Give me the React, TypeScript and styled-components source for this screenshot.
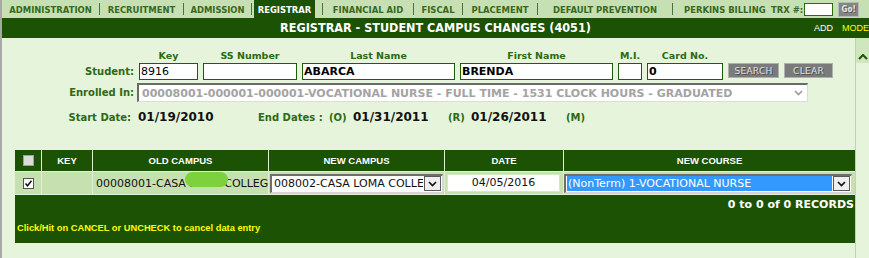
import React from "react";
import styled, { createGlobalStyle } from "styled-components";

const DARK = "#1b5204";
const BODY = "#e5f4db";
const LABEL = "#2d6a12";
const VERDANA = `"DejaVu Sans", Verdana, sans-serif`;
const TAHOMA = `"DejaVu Sans Condensed", "DejaVu Sans", Tahoma, sans-serif`;
const ARIAL = `"Liberation Sans", Arial, sans-serif`;

const GlobalStyle = createGlobalStyle`
  html, body { margin: 0; padding: 0; background: ${BODY}; }
  body { overflow: hidden; }
  * { box-sizing: border-box; }
`;

const Page = styled.div`
  width: 869px;
  height: 258px;
  border-left: 2px solid #a8a8a8;
  background: ${BODY};
  display: flex;
  flex-direction: column;
  overflow: hidden;
`;

/* ---------- top navigation ---------- */
const Nav = styled.nav`
  flex: none;
  height: 18px;
  display: flex;
  align-items: center;
  background: #c6e0b4;
  font: bold 9.4px ${TAHOMA};
  color: #36691c;
  white-space: nowrap;
`;

const NavCell = styled.div<{ $w: number; $pl?: number; $start?: boolean }>`
  flex: none;
  width: ${(p) => p.$w}px;
  height: 100%;
  display: flex;
  align-items: center;
  justify-content: ${(p) => (p.$start ? "flex-start" : "center")};
  padding-left: ${(p) => p.$pl ?? 0}px;
`;

const NavSep = styled.span`
  flex: none;
  width: 1px;
  height: 12px;
  background: #4a7040;
`;

const ActiveTab = styled.span`
  height: 100%;
  width: 61px;
  margin-left: 2px;
  background: ${DARK};
  color: #ffffff;
  display: flex;
  align-items: center;
  justify-content: center;
`;

const TrxLabel = styled.span`
  margin-right: 1px;
`;

const TrxInput = styled.input`
  width: 29px;
  height: 13px;
  margin: 0;
  padding: 0;
  border: 1px solid #2d6a12;
  background: #ffffff;
`;

const GoButton = styled.button`
  margin-left: 5px;
  width: 21px;
  height: 15px;
  padding: 0;
  background: #858585;
  border: 1px solid #b8b8b8;
  color: #e8e8e8;
  font: bold 8px ${TAHOMA};
  text-shadow: 1px 1px 0 #555555;
`;

/* ---------- title bar ---------- */
const TitleBar = styled.header`
  flex: none;
  height: 20px;
  background: ${DARK};
  display: grid;
  grid-template-columns: 1fr auto 1fr;
  align-items: center;
  overflow: hidden;
`;

const Title = styled.h1`
  grid-column: 2;
  margin: 0;
  padding-bottom: 2px;
  font: bold 12.5px ${TAHOMA};
  color: #ffffff;
  white-space: nowrap;
`;

const ModeTag = styled.div`
  grid-column: 3;
  justify-self: end;
  margin-right: 0;
  font: 9px ${ARIAL};
  color: #ffffff;
  white-space: nowrap;
`;

const ModeWord = styled.span`
  margin-left: 9px;
  color: #ffff00;
`;

/* ---------- body ---------- */
const Body = styled.div`
  flex: 1;
  display: flex;
  min-height: 0;
`;

const Main = styled.main`
  flex: 1;
  min-width: 0;
  padding-top: 12px;
`;

const ScrollCol = styled.div`
  flex: none;
  width: 14px;
  border-left: 1px solid #c0d2b6;
  display: flex;
  flex-direction: column;
`;

const ScrollUp = styled.div`
  height: 25px;
  background: #cfe6bf;
  display: flex;
  align-items: flex-end;
  justify-content: center;
  padding-bottom: 3px;
`;

/* ---------- student form ---------- */
const FormGrid = styled.div`
  display: grid;
  grid-template-columns: 132px 59px 94px 153px 153px 24px 76px 51px 49px;
  column-gap: 5px;
  row-gap: 1px;
  align-items: center;
`;

const ColHead = styled.div`
  text-align: center;
  font: bold 9.5px ${VERDANA};
  line-height: 12px;
  color: ${LABEL};
  white-space: nowrap;
`;

const RowLabel = styled.label`
  text-align: right;
  font: bold 10px ${VERDANA};
  color: ${LABEL};
  white-space: nowrap;
`;

const TextInput = styled.input<{ $bold?: boolean }>`
  width: 100%;
  height: 17px;
  margin: 0;
  padding: 0 0 0 1px;
  border: 1px solid #1f5c0b;
  background: #ffffff;
  color: #000000;
  font: ${(p) => (p.$bold ? "bold" : "normal")} 11px ${VERDANA};
  outline: none;
`;

const GreyButton = styled.button`
  align-self: start;
  width: 100%;
  height: 15px;
  margin: 0;
  padding: 0;
  background: #7b7b7b;
  border: 1px solid #b0b0b0;
  color: #e0e0e0;
  font: 9px ${VERDANA};
  letter-spacing: 0.3px;
  text-shadow: 1px 1px 0 #4a4a4a;
`;

const EnrolledRow = styled.div`
  display: flex;
  align-items: center;
  margin-top: 3px;
`;

const EnrolledLabel = styled(RowLabel)`
  flex: none;
  width: 132px;
`;

const EnrolledSelect = styled.div`
  margin-left: 3px;
  width: 671px;
  height: 19px;
  display: flex;
  align-items: center;
  justify-content: space-between;
  padding: 0 4px 0 3px;
  background: #ffffff;
  border-top: 2px solid #6a6a6a;
  border-left: 2px solid #6a6a6a;
  border-right: 1px solid #dcdcdc;
  border-bottom: 1px solid #dcdcdc;
  font: bold 11px ${VERDANA};
  color: #a3a3a3;
  white-space: nowrap;
  overflow: hidden;
`;

const DatesRow = styled.div`
  display: grid;
  grid-template-columns: 136px 120px 71px 24px 95px 23px 95px auto;
  align-items: baseline;
  margin-top: 8px;
`;

const DateLabel = styled.span<{ $right?: boolean }>`
  font: bold 10px ${VERDANA};
  color: ${LABEL};
  white-space: nowrap;
  text-align: ${(p) => (p.$right ? "right" : "left")};
  padding-right: ${(p) => (p.$right ? 7 : 0)}px;
`;

const DateValue = styled.span`
  font: bold 12px ${VERDANA};
  color: #111111;
  white-space: nowrap;
`;

/* ---------- table ---------- */
const Table = styled.div`
  margin: 26px 0 0 13px;
  width: 840px;
  display: grid;
  grid-template-columns: 26px 50px 175px 175px 118px 291px;
  grid-template-rows: 21px 22px 48px;
  gap: 1px;
  background: #e0f0d5;
`;

const HeadCell = styled.div`
  background: ${DARK};
  color: #ffffff;
  font: bold 9.5px ${ARIAL};
  display: flex;
  align-items: center;
  justify-content: center;
  white-space: nowrap;
`;

const DataCell = styled.div<{ $center?: boolean }>`
  position: relative;
  background: #c6e0b0;
  display: flex;
  align-items: center;
  justify-content: ${(p) => (p.$center ? "center" : "flex-start")};
  overflow: hidden;
  white-space: nowrap;
  font: 11px ${VERDANA};
  color: #111111;
`;

const CheckBox = styled.span<{ $checked?: boolean }>`
  width: 11px;
  height: 11px;
  display: flex;
  align-items: center;
  justify-content: center;
  background: ${(p) => (p.$checked ? "#ffffff" : "#dcdcdc")};
  border: 1px solid ${(p) => (p.$checked ? "#555555" : "#a0a0a0")};
`;

const OldCampusText = styled.span`
  padding-left: 3px;
`;

const Redaction = styled.span`
  position: absolute;
  left: 92px;
  top: 0;
  width: 43px;
  height: 15px;
  border-radius: 8px;
  background: #7dd13c;
`;

const SelectBox = styled.div<{ $ml: number; $w: number }>`
  margin-left: ${(p) => p.$ml}px;
  width: ${(p) => p.$w}px;
  height: 19px;
  display: flex;
  align-items: center;
  padding: 0 1px 0 1px;
  background: #ffffff;
  border-top: 2px solid #6e6e6e;
  border-left: 2px solid #6e6e6e;
  border-right: 1px solid #d6d6d6;
  border-bottom: 1px solid #d6d6d6;
  overflow: hidden;
`;

const SelectText = styled.span<{ $selected?: boolean }>`
  flex: 1;
  min-width: 0;
  height: 15px;
  line-height: 15px;
  overflow: hidden;
  padding-left: 1px;
  background: ${(p) => (p.$selected ? "#3399ff" : "transparent")};
  color: ${(p) => (p.$selected ? "#ffffff" : "#111111")};
`;

const ArrowButton = styled.span`
  flex: none;
  width: 17px;
  height: 15px;
  margin-left: 1px;
  display: flex;
  align-items: center;
  justify-content: center;
  background: #efefef;
  border: 1px solid #5a5a5a;
`;

const DateInput = styled.div`
  margin-left: 2px;
  width: 113px;
  height: 18px;
  background: #ffffff;
  border: 1px solid #d4e8c8;
  text-align: center;
  line-height: 16px;
`;

const Footer = styled.div`
  grid-column: 1 / -1;
  background: ${DARK};
  display: flex;
  flex-direction: column;
`;

const Records = styled.div`
  align-self: flex-end;
  padding: 3px 1px 0 0;
  line-height: 13px;
  font: bold 11px ${VERDANA};
  color: #ffffff;
`;

const Note = styled.div`
  margin: 12px 0 0 2px;
  line-height: 11px;
  font: bold 9.3px ${ARIAL};
  color: #ffff00;
`;

const Chevron = ({ color = "#111", w = 9 }: { color?: string; w?: number }) => (
  <svg width={w} height="6" viewBox="0 0 9 6" aria-hidden>
    <polyline points="1,1 4.5,4.6 8,1" fill="none" stroke={color} strokeWidth="1.6" />
  </svg>
);

const navItems: { label: string; w: number }[] = [
  { label: "ADMINISTRATION", w: 97 },
  { label: "RECRUITMENT", w: 83 },
  { label: "ADMISSION", w: 67 },
];
const navItems2: { label: string; w: number }[] = [
  { label: "FINANCIAL AID", w: 90 },
  { label: "FISCAL", w: 48 },
  { label: "PLACEMENT", w: 74 },
  { label: "DEFAULT PREVENTION", w: 134 },
];

export default function App() {
  return (
    <>
      <GlobalStyle />
      <Page>
        <Nav>
          {navItems.map((n) => (
            <React.Fragment key={n.label}>
              <NavCell $w={n.w}>{n.label}</NavCell>
              <NavSep />
            </React.Fragment>
          ))}
          <NavCell $w={70} $start>
            <ActiveTab>REGISTRAR</ActiveTab>
          </NavCell>
          <NavSep />
          {navItems2.map((n) => (
            <React.Fragment key={n.label}>
              <NavCell $w={n.w}>{n.label}</NavCell>
              <NavSep />
            </React.Fragment>
          ))}
          <NavCell $w={98} $pl={11} $start>
            PERKINS BILLING
          </NavCell>
          <TrxLabel>TRX #:</TrxLabel>
          <TrxInput defaultValue="" />
          <GoButton>Go!</GoButton>
        </Nav>

        <TitleBar>
          <Title>REGISTRAR - STUDENT CAMPUS CHANGES (4051)</Title>
          <ModeTag>
            ADD<ModeWord>MODE</ModeWord>
          </ModeTag>
        </TitleBar>

        <Body>
          <Main>
            <FormGrid>
              <span />
              <ColHead>Key</ColHead>
              <ColHead>SS Number</ColHead>
              <ColHead>Last Name</ColHead>
              <ColHead>First Name</ColHead>
              <ColHead>M.I.</ColHead>
              <ColHead>Card No.</ColHead>
              <span />
              <span />

              <RowLabel>Student:</RowLabel>
              <TextInput defaultValue="8916" />
              <TextInput defaultValue="" />
              <TextInput $bold defaultValue="ABARCA" />
              <TextInput $bold defaultValue="BRENDA" />
              <TextInput defaultValue="" />
              <TextInput $bold defaultValue="0" />
              <GreyButton>SEARCH</GreyButton>
              <GreyButton>CLEAR</GreyButton>
            </FormGrid>

            <EnrolledRow>
              <EnrolledLabel>Enrolled In:</EnrolledLabel>
              <EnrolledSelect>
                <span>00008001-000001-000001-VOCATIONAL NURSE - FULL TIME - 1531 CLOCK HOURS - GRADUATED</span>
                <Chevron color="#9a9a9a" w={9} />
              </EnrolledSelect>
            </EnrolledRow>

            <DatesRow>
              <DateLabel $right>Start Date:</DateLabel>
              <DateValue>01/19/2010</DateValue>
              <DateLabel>End Dates :</DateLabel>
              <DateLabel>(O)</DateLabel>
              <DateValue>01/31/2011</DateValue>
              <DateLabel>(R)</DateLabel>
              <DateValue>01/26/2011</DateValue>
              <DateLabel>(M)</DateLabel>
            </DatesRow>

            <Table>
              <HeadCell>
                <CheckBox />
              </HeadCell>
              <HeadCell>KEY</HeadCell>
              <HeadCell>OLD CAMPUS</HeadCell>
              <HeadCell>NEW CAMPUS</HeadCell>
              <HeadCell>DATE</HeadCell>
              <HeadCell>NEW COURSE</HeadCell>

              <DataCell $center>
                <CheckBox $checked>
                  <svg width="9" height="9" viewBox="0 0 9 9" aria-hidden>
                    <polyline points="1.5,4.5 3.5,6.8 7.5,1.8" fill="none" stroke="#111" strokeWidth="1.5" />
                  </svg>
                </CheckBox>
              </DataCell>
              <DataCell />
              <DataCell>
                <OldCampusText>00008001-CASA LOMA COLLEGE</OldCampusText>
                <Redaction />
              </DataCell>
              <DataCell>
                <SelectBox $ml={1} $w={173}>
                  <SelectText>008002-CASA LOMA COLLEGE</SelectText>
                  <ArrowButton>
                    <Chevron />
                  </ArrowButton>
                </SelectBox>
              </DataCell>
              <DataCell>
                <DateInput>04/05/2016</DateInput>
              </DataCell>
              <DataCell>
                <SelectBox $ml={0} $w={288}>
                  <SelectText $selected>(NonTerm) 1-VOCATIONAL NURSE</SelectText>
                  <ArrowButton>
                    <Chevron />
                  </ArrowButton>
                </SelectBox>
              </DataCell>

              <Footer>
                <Records>0 to 0 of 0 RECORDS</Records>
                <Note>Click/Hit on CANCEL or UNCHECK to cancel data entry</Note>
              </Footer>
            </Table>
          </Main>
          <ScrollCol>
            <ScrollUp>
              <svg width="10" height="6" viewBox="0 0 10 6" aria-hidden>
                <polyline points="1,5 5,1 9,5" fill="none" stroke="#1b5204" strokeWidth="2" />
              </svg>
            </ScrollUp>
          </ScrollCol>
        </Body>
      </Page>
    </>
  );
}
